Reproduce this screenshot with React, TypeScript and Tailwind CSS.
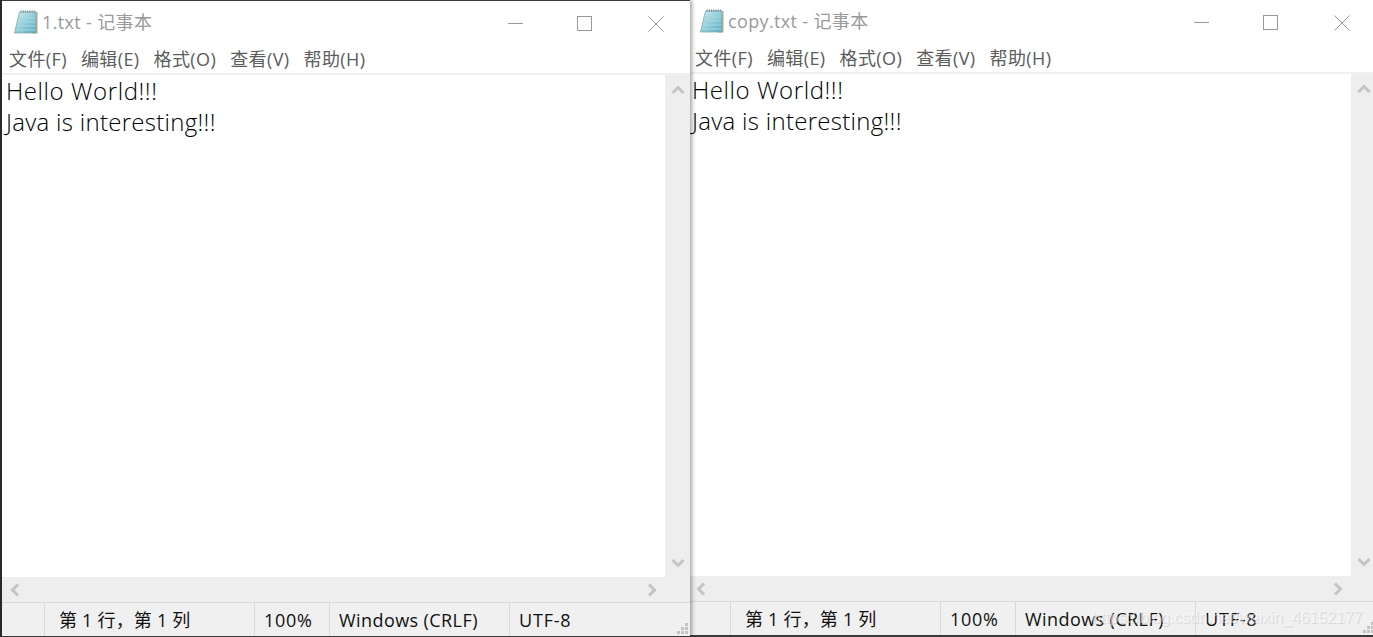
const UI = '"Open Sans","Noto Sans CJK SC",sans-serif';

function NotepadIcon() {
  return (
    <svg width="25" height="26" viewBox="0 0 25 26" className="shrink-0">
      <defs>
        <linearGradient id="np" x1="0" y1="0" x2="1" y2="1">
          <stop offset="0" stopColor="#d6eef2" />
          <stop offset="0.55" stopColor="#8ccbd8" />
          <stop offset="1" stopColor="#5fa9bd" />
        </linearGradient>
      </defs>
      <path d="M8 3 H23.5 V24.5 H18 Z" fill="#b9a888" />
      <path d="M5.5 3 H22 V24 H0.5 Z" fill="url(#np)" stroke="#7fa9b5" strokeWidth="0.8" />
      <path d="M4.5 9 H21 M4 13 H21 M3 17 H21 M2 21 H21" stroke="#a6d6df" strokeWidth="1" />
      <path d="M6.5 2.5 H22" stroke="#7d8a94" strokeWidth="2" strokeDasharray="1.2 1" />
    </svg>
  );
}

function Chevron({ d }: { d: string }) {
  return (
    <svg width="14" height="14" viewBox="0 0 14 14" className="shrink-0">
      <path d={d} fill="none" stroke="#c4c4c4" strokeWidth="3" />
    </svg>
  );
}

function Window({ title, className }: { title: string; className: string }) {
  const menus = ['文件(F)', '编辑(E)', '格式(O)', '查看(V)', '帮助(H)'];
  return (
    <div className={`w-[688px] h-[637px] shrink-0 flex flex-col bg-white ${className}`} style={{ fontFamily: UI }}>
      <div className="flex items-start shrink-0 h-[43px]">
        <div className="flex items-center pl-[12px] pt-[8px] gap-[3px]">
          <NotepadIcon />
          <span className="text-[18px] leading-[26px] text-[#9a9a9a] tracking-[0.35px]">{title}</span>
        </div>
        <div className="ml-auto flex items-start pt-[15px] pr-[26px]">
          <svg width="16" height="16" viewBox="0 0 16 16" className="mr-[53px]">
            <path d="M0 7.5 H15" stroke="#999" strokeWidth="1" />
          </svg>
          <svg width="16" height="16" viewBox="0 0 16 16" className="mr-[55px]">
            <rect x="0.5" y="0.5" width="14" height="14" fill="none" stroke="#999" strokeWidth="1" />
          </svg>
          <svg width="16" height="16" viewBox="0 0 16 16">
            <path d="M0.5 0.5 L15.5 15.5 M15.5 0.5 L0.5 15.5" stroke="#999" strokeWidth="1" />
          </svg>
        </div>
      </div>
      <div className="flex h-[29px] shrink-0 items-center pl-[7px] pt-[2px] gap-[14px] text-[18px] text-[#5c5c5c] tracking-[0.4px]">
        {menus.map((m) => (
          <span key={m} className="whitespace-nowrap">{m}</span>
        ))}
      </div>
      <div className="h-[2px] bg-[#f0f0f0] shrink-0" />
      <div className="flex h-[502px] shrink-0">
        <div className="w-[663px] pl-[4px] text-[24px] leading-[31px] font-light text-black">
          <div className="tracking-[0.58px]">Hello World!!!</div>
          <div className="tracking-[0.29px]">Java is interesting!!!</div>
        </div>
        <div className="flex-1 bg-[#eeeeee] flex flex-col items-center justify-between pt-[8px] pb-[7px]">
          <Chevron d="M1.5 10 L7 4.5 L12.5 10" />
          <Chevron d="M1.5 4 L7 9.5 L12.5 4" />
        </div>
      </div>
      <div className="h-[25px] shrink-0 bg-[#eeeeee] flex items-center justify-between pl-[6px] pr-[31px]">
        <Chevron d="M10 1.5 L4.5 7 L10 12.5" />
        <Chevron d="M4 1.5 L9.5 7 L4 12.5" />
      </div>
      <div className="relative h-[34px] shrink-0 bg-[#f0f0f0] border-t border-[#d9d9d9] flex text-[18px] text-[#111] leading-[35px]">
        <div className="w-[42px] shrink-0" />
        <div className="w-[210px] shrink-0 border-l border-[#d9d9d9] pl-[14px] tracking-[0.2px] whitespace-nowrap">第 1 行，第 1 列</div>
        <div className="w-[75px] shrink-0 border-l border-[#d9d9d9] pl-[9px] tracking-[0.7px]">100%</div>
        <div className="w-[180px] shrink-0 border-l border-[#d9d9d9] pl-[9px] tracking-[0.42px] whitespace-nowrap">Windows (CRLF)</div>
        <div className="flex-1 border-l border-[#d9d9d9] pl-[9px] tracking-[0.8px]">UTF-8</div>
        <svg width="12" height="12" viewBox="0 0 12 12" className="absolute right-[1px] bottom-[1px]">
          <path d="M8 0h3v3H8z M4 4h3v3H4z M8 4h3v3H8z M0 8h3v3H0z M4 8h3v3H4z M8 8h3v3H8z" fill="#c4c4c4" />
        </svg>
      </div>
      <div className="flex-1 bg-[#3a3a3a]" />
    </div>
  );
}

export default function App() {
  return (
    <div className="relative flex w-[1373px] h-[637px] overflow-hidden bg-[#2b2b2b]">
      <Window
        title="1.txt - 记事本"
        className="relative z-10 ml-[2px] border-t border-[#3a3a3a] shadow-[2px_0_4px_rgba(0,0,0,0.35)]"
      />
      <Window title="copy.txt - 记事本" className="-ml-[2px]" />
      <div
        className="absolute z-20 left-[1092px] top-[603px] text-[15.9px] leading-[30px] text-white/55 whitespace-nowrap [text-shadow:1px_1px_1px_rgba(0,0,0,0.12)]"
        style={{ fontFamily: '"Liberation Sans",sans-serif' }}
      >
        https://blog.csdn.net/weixin_46152177
      </div>
    </div>
  );
}
